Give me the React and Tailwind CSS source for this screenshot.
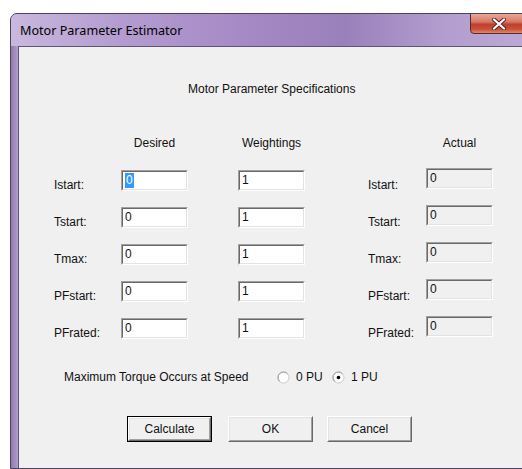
import React from "react";

const ui = { fontFamily: '"Liberation Sans", Arial, sans-serif' };

// Classic sunken edit box
function Edit({ value, selected, readOnly, className = "" }) {
  return (
    <div
      className={`w-[67px] h-[21px] border border-t-[#a0a0a0] border-l-[#a0a0a0] border-r-white border-b-white ${className}`}
    >
      <div
        className={`w-full h-full border border-t-[#696969] border-l-[#696969] border-r-[#e3e3e3] border-b-[#e3e3e3] ${
          readOnly ? "bg-[#f0f0f0]" : "bg-white"
        } flex items-start pt-px pl-[2px]`}
      >
        {selected ? (
          <span className="bg-[#3399ff] text-white px-[1px] leading-[15px]">{value}</span>
        ) : (
          <span className="leading-[15px]">{value}</span>
        )}
      </div>
    </div>
  );
}

// Classic raised push button
function Button({ children, isDefault }) {
  const inner = (
    <div className="w-full h-full border border-t-white border-l-white border-r-[#696969] border-b-[#696969]">
      <div className="w-full h-full border border-t-[#e3e3e3] border-l-[#e3e3e3] border-r-[#a0a0a0] border-b-[#a0a0a0] bg-[#f0f0f0] flex items-center justify-center">
        {children}
      </div>
    </div>
  );
  return (
    <div className={`w-[85px] h-[26px] ${isDefault ? "border border-black" : ""}`}>{inner}</div>
  );
}

function Radio({ checked }) {
  return (
    <svg width="13" height="13" viewBox="0 0 13 13">
      <circle cx="6.5" cy="6.5" r="5.5" fill="#ffffff" stroke="#c8c8c8" strokeWidth="1" />
      <path d="M2.6 10.4 A5.5 5.5 0 0 1 10.4 2.6" stroke="#9a9a9a" strokeWidth="1" fill="none" />
      {checked && <circle cx="6.5" cy="6.5" r="1.8" fill="#000" />}
    </svg>
  );
}

const rows = [
  { label: "Istart:", sel: true },
  { label: "Tstart:" },
  { label: "Tmax:" },
  { label: "PFstart:" },
  { label: "PFrated:" },
];

export default function App() {
  return (
    <div className="w-[522px] h-[469px] bg-white overflow-hidden pt-[13px] pl-[10px]" style={ui}>
      <div className="w-[540px] h-[456px] flex flex-col rounded-tl-[7px] border border-[#4d4360] bg-[#b09bcc] overflow-hidden">
        {/* title bar */}
        <div className="h-[32px] flex items-start bg-[linear-gradient(90deg,#c9b8de_0%,#b49cd0_20%,#a488c4_45%,#9a80ba_62%,#b29dce_80%,#bfaad8_100%)]">
          <div
            className="pl-[9px] pt-[9px] text-[12.6px] text-black leading-[16px]"
            style={{ fontFamily: '"Noto Sans", "Open Sans", sans-serif' }}
          >
            Motor Parameter Estimator
          </div>
          <div className="ml-auto mr-[22px] w-[57px] h-[21px] -mt-px rounded-b-[4px] border border-[#5b2a2a] bg-[linear-gradient(180deg,#e9a89a_0%,#d77a66_40%,#c0402c_55%,#c8503a_80%,#e08a6a_100%)] flex items-center justify-center">
            <svg width="14" height="12" viewBox="0 0 14 12">
              <path
                d="M2 1.5 L12 10.5 M12 1.5 L2 10.5"
                stroke="#5a2020"
                strokeWidth="4"
                strokeLinecap="round"
              />
              <path
                d="M2 1.5 L12 10.5 M12 1.5 L2 10.5"
                stroke="#ffffff"
                strokeWidth="2.2"
                strokeLinecap="round"
              />
            </svg>
          </div>
        </div>
        {/* body with left frame */}
        <div className="flex flex-1">
          <div className="w-[7px] bg-[linear-gradient(90deg,#9178b2,#b39dd0)]" />
          <div className="flex-1 border-l border-t border-[#5d5670] bg-[#f0f0f0] text-[12px] text-[#111]">
            <div className="h-[35px]" />
            <div className="pl-[169px] h-[14px] leading-[14px]">Motor Parameter Specifications</div>
            <div className="h-[40px]" />
            <div className="flex h-[14px] leading-[14px]">
              <div className="w-[102px]" />
              <div className="w-[67px] text-center">Desired</div>
              <div className="w-[50px]" />
              <div className="w-[67px] text-center">Weightings</div>
              <div className="w-[121px]" />
              <div className="w-[67px] text-center">Actual</div>
            </div>
            <div className="h-[20px]" />
            {rows.map((r) => (
              <div key={r.label} className="flex h-[37px] items-start">
                <div className="w-[35px]" />
                <div className="w-[67px] pt-[8px] leading-[14px]">{r.label}</div>
                <Edit value="0" selected={r.sel} />
                <div className="w-[50px]" />
                <Edit value="1" />
                <div className="w-[63px]" />
                <div className="w-[58px] pt-[8px] leading-[14px]">{r.label}</div>
                <Edit value="0" readOnly className="-mt-[2px]" />
              </div>
            ))}
            <div className="h-[15px]" />
            <div className="flex items-center h-[14px] leading-[14px]">
              <div className="w-[45px]" />
              <div className="w-[213px]">Maximum Torque Occurs at Speed</div>
              <Radio />
              <div className="ml-[6px] w-[36px]">0 PU</div>
              <Radio checked />
              <div className="ml-[6px]">1 PU</div>
            </div>
            <div className="h-[32px]" />
            <div className="flex items-start">
              <div className="w-[108px]" />
              <Button isDefault>Calculate</Button>
              <div className="w-[16px]" />
              <Button>OK</Button>
              <div className="w-[14px]" />
              <Button>Cancel</Button>
            </div>
          </div>
        </div>
      </div>
    </div>
  );
}
